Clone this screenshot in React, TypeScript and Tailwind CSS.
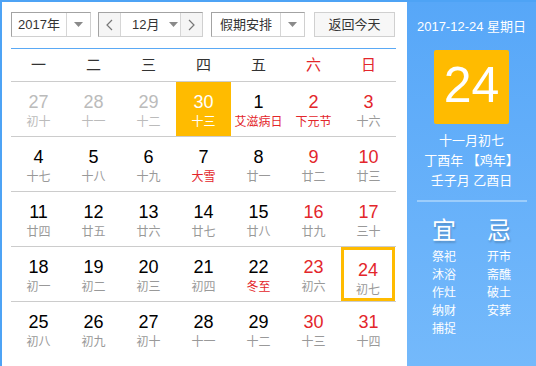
import React from "react";

type Day = {
  n: number;
  l: string;
  red?: boolean;
  fest?: boolean;
  dim?: boolean;
  sel?: boolean;
  today?: boolean;
};

const rows: Day[][] = [
  [
    { n: 27, l: "初十", dim: true },
    { n: 28, l: "十一", dim: true },
    { n: 29, l: "十二", dim: true },
    { n: 30, l: "十三", sel: true },
    { n: 1, l: "艾滋病日", fest: true },
    { n: 2, l: "下元节", red: true, fest: true },
    { n: 3, l: "十六", red: true },
  ],
  [
    { n: 4, l: "十七" },
    { n: 5, l: "十八" },
    { n: 6, l: "十九" },
    { n: 7, l: "大雪", fest: true },
    { n: 8, l: "廿一" },
    { n: 9, l: "廿二", red: true },
    { n: 10, l: "廿三", red: true },
  ],
  [
    { n: 11, l: "廿四" },
    { n: 12, l: "廿五" },
    { n: 13, l: "廿六" },
    { n: 14, l: "廿七" },
    { n: 15, l: "廿八" },
    { n: 16, l: "廿九", red: true },
    { n: 17, l: "三十", red: true },
  ],
  [
    { n: 18, l: "初一" },
    { n: 19, l: "初二" },
    { n: 20, l: "初三" },
    { n: 21, l: "初四" },
    { n: 22, l: "冬至", fest: true },
    { n: 23, l: "初六", red: true },
    { n: 24, l: "初七", red: true, today: true },
  ],
  [
    { n: 25, l: "初八" },
    { n: 26, l: "初九" },
    { n: 27, l: "初十" },
    { n: 28, l: "十一" },
    { n: 29, l: "十二" },
    { n: 30, l: "十三", red: true },
    { n: 31, l: "十四", red: true },
  ],
];

const weekdays = ["一", "二", "三", "四", "五", "六", "日"];

function Caret() {
  return (
    <svg width="9" height="5" viewBox="0 0 9 5">
      <path d="M0 0 L9 0 L4.5 5 Z" fill="#8a8a8a" />
    </svg>
  );
}

function Chevron({ dir }: { dir: "l" | "r" }) {
  return (
    <svg width="7" height="12" viewBox="0 0 7 12">
      <polyline
        points={dir === "l" ? "6,1 1,6 6,11" : "1,1 6,6 1,11"}
        fill="none"
        stroke="#777"
        strokeWidth="1.2"
      />
    </svg>
  );
}

function DayCell({ d }: { d: Day }) {
  let numColor = "text-black";
  let lunColor = "text-[#999]";
  if (d.red) numColor = "text-[#e3262b]";
  if (d.fest) lunColor = "text-[#e3262b]";
  if (d.dim) {
    numColor = "text-[#bbb]";
    lunColor = "text-[#bbb]";
  }
  if (d.sel) {
    numColor = "text-white";
    lunColor = "text-white";
  }
  return (
    <div
      className={`h-[54px] flex flex-col items-center pt-[9px] ${
        d.sel ? "bg-[#ffbb00]" : ""
      } ${d.today ? "w-[54px] border-[3px] border-[#ffbb00] pt-[6px]" : ""}`}
    >
      <div className={`text-[18px] leading-[22px] ${numColor}`}>{d.n}</div>
      <div className={`text-[12px] leading-[18px] ${lunColor}`}>{d.l}</div>
    </div>
  );
}

export default function App() {
  return (
    <div
      className="w-[536px] h-[366px] flex border-l-2 border-t-2 border-[#4ea3f5] bg-white overflow-hidden"
      style={{ fontFamily: '"Liberation Sans", "Noto Sans CJK SC", sans-serif' }}
    >
      <div className="w-[405px] pl-[9px] pt-[10px]">
        <div className="flex items-center h-[25px] text-[13px] text-[#333]">
          <div className="flex h-[25px] w-[80px] border border-[#a3a3a3] border-r-[#d0d0d0] border-b-[#d0d0d0]">
            <div className="w-[55px] flex items-center justify-center border-r border-[#d6d6d6]">
              2017年
            </div>
            <div className="flex-1 flex items-center justify-center">
              <Caret />
            </div>
          </div>
          <div className="ml-[7px] flex h-[25px] w-[105px] border border-[#a3a3a3] border-r-[#d0d0d0] border-b-[#d0d0d0]">
            <div className="w-[22px] bg-[#f5f5f5] flex items-center justify-center border-r border-[#d6d6d6]">
              <Chevron dir="l" />
            </div>
            <div className="w-[60px] flex items-center pl-[11px] gap-[10px] border-r border-[#d6d6d6]">
              <span>12月</span>
              <Caret />
            </div>
            <div className="flex-1 bg-[#f5f5f5] flex items-center justify-center">
              <Chevron dir="r" />
            </div>
          </div>
          <div className="ml-[8px] flex h-[25px] w-[94px] border border-[#a3a3a3] border-r-[#d0d0d0] border-b-[#d0d0d0]">
            <div className="w-[69px] flex items-center justify-center border-r border-[#d6d6d6]">
              假期安排
            </div>
            <div className="flex-1 flex items-center justify-center">
              <Caret />
            </div>
          </div>
          <div className="ml-[9px] h-[25px] w-[81px] border border-[#d0d0d0] bg-[#f7f7f7] flex items-center justify-center">
            返回今天
          </div>
        </div>

        <div className="mt-[11px] w-[385px] h-px bg-[#5aa9f5]" />

        <div className="w-[385px] grid grid-cols-7 h-[33px] border-b border-[#ccc] text-[15px] items-center">
          {weekdays.map((w, i) => (
            <div
              key={w}
              className={`text-center ${i >= 5 ? "text-[#e3262b]" : "text-[#333]"}`}
            >
              {w}
            </div>
          ))}
        </div>

        {rows.map((r, ri) => (
          <div
            key={ri}
            className={`w-[385px] grid grid-cols-7 ${
              ri < rows.length - 1 ? "border-b border-[#ccc]" : ""
            }`}
          >
            {r.map((d, di) => (
              <DayCell key={di} d={d} />
            ))}
          </div>
        ))}
      </div>

      <div className="flex-1 bg-linear-to-b from-[#57a7f8] to-[#74b9fb] flex flex-col items-center text-white">
        <div className="mt-[15px] text-[13px] leading-[20px]">2017-12-24 星期日</div>
        <div className="mt-[13px] w-[75px] h-[74px] bg-[#ffbb00] rounded-[2px] flex items-center justify-center text-[50px] leading-none pb-[4px]">
          24
        </div>
        <div className="mt-[7px] text-[13px] leading-[20px] text-center">
          <div>十一月初七</div>
          <div>丁酉年 【鸡年】</div>
          <div>壬子月 乙酉日</div>
        </div>
        <div className="mt-[9px] w-[110px] h-[2px] bg-[#9ccdfb]" />
        <div className="mt-[14px] flex">
          <div className="w-[55px] flex flex-col items-center">
            <div className="text-[24px] leading-[30px] [text-shadow:1px_2px_2px_rgba(0,0,0,0.2)]">
              宜
            </div>
            <div className="mt-[2px] text-[12px] leading-[18px]">
              <div>祭祀</div>
              <div>沐浴</div>
              <div>作灶</div>
              <div>纳财</div>
              <div>捕捉</div>
            </div>
          </div>
          <div className="w-[55px] flex flex-col items-center">
            <div className="text-[24px] leading-[30px] [text-shadow:1px_2px_2px_rgba(0,0,0,0.2)]">
              忌
            </div>
            <div className="mt-[2px] text-[12px] leading-[18px]">
              <div>开市</div>
              <div>斋醮</div>
              <div>破土</div>
              <div>安葬</div>
            </div>
          </div>
        </div>
      </div>
    </div>
  );
}
